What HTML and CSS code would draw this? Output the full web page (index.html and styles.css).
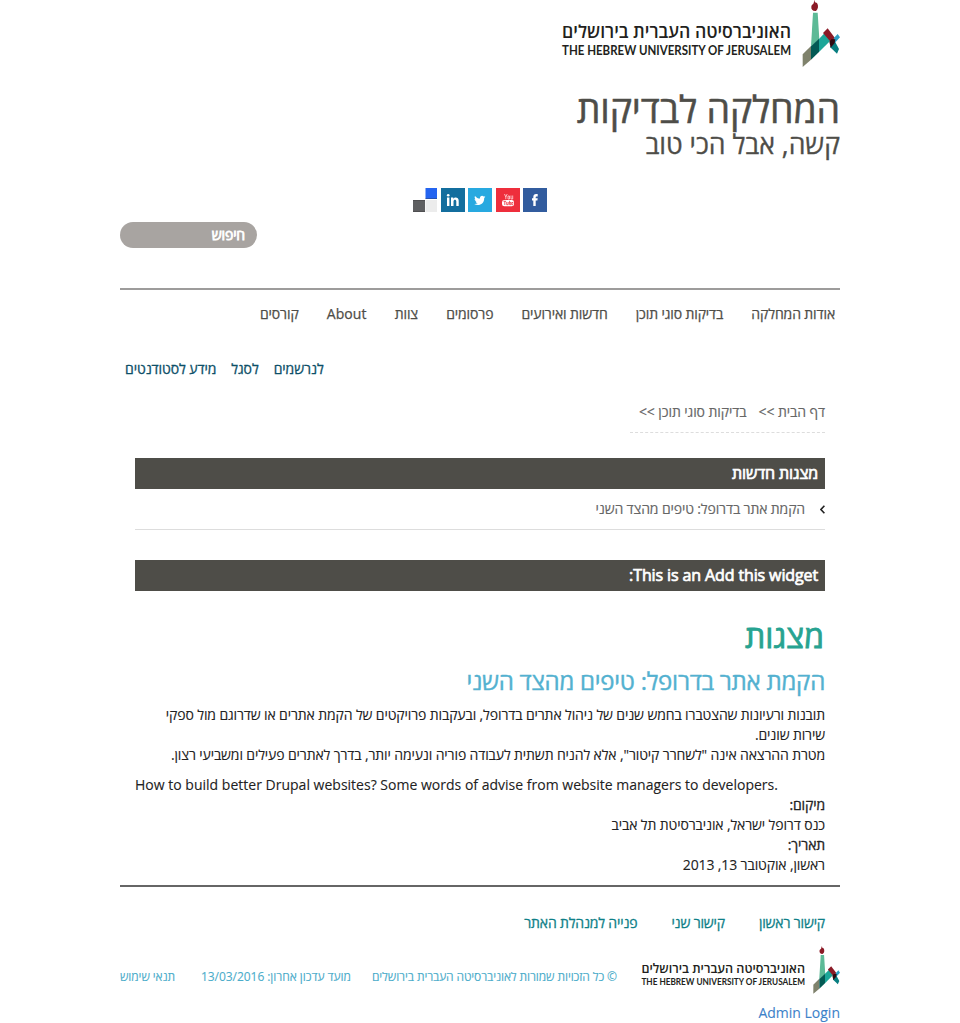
FILE: index.html
```html
<!DOCTYPE html>
<html lang="he" dir="rtl">
<head>
<meta charset="utf-8">
<title>מצגות</title>
<link rel="stylesheet" href="styles.css">
</head>
<body>
<svg class="defs" width="0" height="0">
  <symbol id="torch" viewBox="0 0 45 68">
    <g transform="scale(.3333)">
      <path fill="#8b1a26" d="M60 0c-3 6 2 8 6 9 5 7 4 18-3 24-10 1-15-5-14-13 0-5 5-7 7-10 1-4 1-8 4-10z"/>
      <path fill="#5dba97" d="M54 38h14l5 80-25 21z"/>
      <path fill="#7f826c" d="M23 163l25-25v41l-25 22z"/>
      <path fill="#035a54" d="M48 139l24-23v40l-24 23z"/>
      <path fill="#1ca698" d="M72 117l22-23 12 28-34 34z"/>
      <path fill="#8b1a26" d="M84 99l14-14 24 32-14 10z"/>
      <path fill="#2e9fc4" d="M116 115l12-13 7 10-15 16z"/>
      <path fill="#087e80" d="M105 141l14-18 13 24-6 14z"/>
      <path fill="#300b12" d="M103 125l6-7h12l-2 11-12 14z"/>
    </g>
  </symbol>
</svg>
<div class="page">
  <header class="header">
    <svg class="logo" viewBox="0 0 280 68">
      <text class="logo-he" x="231" y="38" textLength="229" lengthAdjust="spacingAndGlyphs">האוניברסיטה העברית בירושלים</text>
      <text class="logo-en" x="2" y="55" textLength="229" lengthAdjust="spacingAndGlyphs">THE HEBREW UNIVERSITY OF JERUSALEM</text>
      <use href="#torch" x="235" y="0" width="45" height="68"/>
    </svg>
    <h1 class="site-name"><span>המחלקה לבדיקות</span></h1>
    <p class="slogan"><span>קשה, אבל הכי טוב</span></p>
    <div class="social">
      <svg viewBox="0 0 24 24"><path fill="#325c9e" d="M0 0h24v24H0z"/><path fill="#fff" d="M10.3 18v-5.400H9v-2.300h1.300V9c0-2 1-3 2.800-3h1.600v2.400h-1c-.8 0-1 .3-1 1v.9h2l-.3 2.300h-1.700V18z"/></svg>
      <svg viewBox="0 0 24 24"><path fill="#ee2e3c" d="M0 0h24v24H0z"/><rect x="6" y="12" width="12" height="6.200" rx="2.300" fill="#fff"/><path fill="none" stroke="#ffd9dc" stroke-width=".8" d="M8.500 6l1.300 3v2.200M11.200 6L9.800 9M12 8h1.500v3H12zM15 7.500V11h1.700V7.500"/><path fill="none" stroke="#ee2e3c" stroke-width=".8" d="M7.500 13.300h2.600M8.800 13.300V17M10.700 14v2.700h1.500V14M13.600 12.800v3.900h1.200v-2.200h-1.200M17 16.700h-1.200v-2.200H17v1"/></svg>
      <svg viewBox="0 0 24 24"><path fill="#28a9e0" d="M0 0h24v24H0z"/><path fill="#fff" d="M17.500 8.800l-1.300.4 1-1.300-1.500.6c-1.600-1.500-4-.3-3.700 2-2 0-3.600-1-5-2.600-.7 1.300-.3 2.500.7 3.300l-1.100-.3c0 1.200.8 2 2 2.400l-1 .1c.3 1 1.200 1.600 2.200 1.600-1 .9-2.200 1.200-3.600 1.100 4.700 2.600 10.200-.3 10-6.100z"/></svg>
      <svg viewBox="0 0 24 24"><path fill="#136e9e" d="M0 0h24v24H0z"/><path fill="#fff" d="M6 9.500h2.400V18H6zM10 9.500h2.300v1.200c1.500-2.200 5.400-1.700 5.400 2V18h-2.400v-4.700c0-2.200-2.800-2.200-2.800.1V18H10z"/><circle cx="7.200" cy="7.300" r="1.300" fill="#fff"/></svg>
      <svg viewBox="0 0 24 24"><path fill="#fff" d="M0 0h12v12H0z"/><path fill="#2464f0" d="M12.500 0H24v11H12.500z"/><path fill="#5e5f61" d="M0 12h12v12H0z"/><path fill="#ececec" d="M12.500 12H24v12H12.500z"/><path fill="none" stroke="#333" d="M0 23.500h12M0 12.500h12M12.500 10.500H24" opacity=".35"/></svg>
    </div>
    <div class="search"><span>חיפוש</span></div>
  </header>
  <nav class="main-nav">
    <a>אודות המחלקה</a><a>בדיקות סוגי תוכן</a><a>חדשות ואירועים</a><a>פרסומים</a><a>צוות</a><a class="latin">About</a><a>קורסים</a>
  </nav>
  <nav class="sub-nav"><a>לנרשמים</a><a>לסגל</a><a>מידע לסטודנטים</a></nav>
  <main class="main">
    <div class="crumbs"><a>דף הבית &gt;&gt;</a><a>בדיקות סוגי תוכן &gt;&gt;</a></div>
    <h2 class="block-title">מצגות חדשות</h2>
    <div class="list-item">
      <svg class="arrow" viewBox="0 0 5 9"><path d="M4.400 .8L.9 4.500 4.400 8.200"/></svg>
      <a>הקמת אתר בדרופל: טיפים מהצד השני</a>
    </div>
    <h2 class="block-title block-widget">This is an Add this widget:</h2>
    <h2 class="page-title"><span>מצגות</span></h2>
    <h3 class="node-title"><span>הקמת אתר בדרופל: טיפים מהצד השני</span></h3>
    <div class="body">
      <p>תובנות ורעיונות שהצטברו בחמש שנים של ניהול אתרים בדרופל, ובעקבות פרויקטים של הקמת אתרים או שדרוגם מול ספקי<br>שירות שונים.<br>מטרת ההרצאה אינה "לשחרר קיטור", אלא להניח תשתית לעבודה פוריה ונעימה יותר, בדרך לאתרים פעילים ומשביעי רצון.</p>
      <p class="en" dir="ltr">How to build better Drupal websites? Some words of advise from website managers to developers.</p>
      <p class="label">מיקום:</p>
      <p>כנס דרופל ישראל, אוניברסיטת תל אביב</p>
      <p class="label">תאריך:</p>
      <p>ראשון, אוקטובר 13, 2013</p>
    </div>
  </main>
  <footer class="footer">
    <nav class="footer-nav"><a>קישור ראשון</a><a>קישור שני</a><a>פנייה למנהלת האתר</a></nav>
    <div class="legal">
      <svg class="logo-small" viewBox="0 0 280 68">
        <text class="logo-he" x="231" y="38" textLength="229" lengthAdjust="spacingAndGlyphs">האוניברסיטה העברית בירושלים</text>
        <text class="logo-en" x="2" y="55" textLength="229" lengthAdjust="spacingAndGlyphs">THE HEBREW UNIVERSITY OF JERUSALEM</text>
        <use href="#torch" x="235" y="0" width="45" height="68"/>
      </svg>
      <span class="copy">© כל הזכויות שמורות לאוניברסיטה העברית בירושלים</span>
      <span class="updated">מועד עדכון אחרון: 13/03/2016</span>
      <a class="terms">תנאי שימוש</a>
    </div>
    <a class="login">Admin Login</a>
  </footer>
</div>
</body>
</html>
```

FILE: styles.css
```css
* { box-sizing: border-box; }
body { margin: 0; background: #fff; color: #222; font: 14px/20px "Open Sans", "Noto Sans", "DejaVu Sans", sans-serif; }
h1, h2, h3, p { margin: 0; font-weight: 400; }
a, span { white-space: nowrap; }
.defs { position: absolute; }
.page { width: 720px; height: 1023px; margin: 0 auto; overflow: hidden; }
.header { height: 290px; border-bottom: 2px solid #9d9c9b; }
.logo { display: block; width: 280px; height: 68px; }
.logo-he, .logo-en { fill: #231f20; letter-spacing: 0; }
.logo-he { font: 600 18px "Open Sans", sans-serif; direction: rtl; }
.logo-en { font: 700 12.500px Lato, sans-serif; direction: ltr; }
.site-name { margin-top: 20px; height: 44px; line-height: 41px; font-size: 37.500px; letter-spacing: -.15px; color: #4e4d48; -webkit-text-stroke: .5px #4e4d48; }
.slogan { height: 24px; line-height: 24px; font-size: 26.600px; color: #4e4d48; -webkit-text-stroke: .3px; }
.social { display: flex; justify-content: center; gap: 3.500px; margin-top: 32px; }
.social svg { width: 24px; height: 24px; display: block; }
.search { width: 137px; height: 26px; margin: 10px auto 0 0; padding-right: 12px; border-radius: 13px; background: #a8a4a1; color: #fff; line-height: 26px; letter-spacing: -.15px; -webkit-text-stroke: .8px; }
.main-nav { display: flex; gap: 28.100px; padding: 14px 5px 0; height: 69px; color: #4e4d48; letter-spacing: -.12px; -webkit-text-stroke: .25px; }
.main-nav .latin { letter-spacing: .1px; }
.sub-nav { display: flex; gap: 15px; justify-content: flex-end; padding-left: 5px; height: 41px; color: #0d4f68; letter-spacing: -.08px; -webkit-text-stroke: .3px; }
.main { padding: 1px 15px 0; height: 485px; }
.crumbs { display: flex; gap: 12px; width: 195px; height: 32px; padding-top: 1px; border-bottom: 1px dashed #ddd; color: #666; letter-spacing: -.08px; -webkit-text-stroke: .15px; }
.block-title { height: 31px; margin-top: 25px; padding: 0 7px; background: #4e4d48; color: #fff; font-size: 16px; line-height: 31px; letter-spacing: -.12px; -webkit-text-stroke: .7px; }
.block-widget { margin-top: 30px; }
.list-item { display: flex; align-items: center; gap: 15px; height: 41px; border-bottom: 1px solid #ddd; color: #666; letter-spacing: -.13px; -webkit-text-stroke: .15px; }
.arrow { width: 5px; height: 9px; fill: none; stroke: #222; stroke-width: 1.600; }
.page-title { margin: 26px 1px 0 0; height: 40px; line-height: 38px; font-size: 32px; color: #27a391; -webkit-text-stroke: .8px; }
.node-title { height: 48px; line-height: 48px; font-size: 24px; letter-spacing: -.24px; color: #53b1d0; -webkit-text-stroke: .4px; }
.body { letter-spacing: -.125px; -webkit-text-stroke: .1px; }
.body .en { margin-top: 10px; text-align: left; letter-spacing: .01px; }
.body .label { -webkit-text-stroke: .3px; }
.footer { height: 138px; border-top: 2px solid #666; }
.footer-nav { display: flex; gap: 34px; padding: 26px 15px 0; height: 59px; color: #0f7f88; letter-spacing: -.17px; -webkit-text-stroke: .3px; }
.legal { display: flex; align-items: center; height: 49px; font-size: 12px; color: #4bacca; letter-spacing: -.12px; -webkit-text-stroke: .1px; }
.logo-small { width: 200px; height: 48.600px; flex: none; -webkit-text-stroke: 0; }
.copy { margin: 13px 23px 0 0; }
.updated { margin: 13px 21px 0 0; letter-spacing: -.05px; }
.terms { margin: 13px auto 0 0; }
.login { display: block; margin-top: 8px; color: #3d82c9; -webkit-text-stroke: .1px; }
```
